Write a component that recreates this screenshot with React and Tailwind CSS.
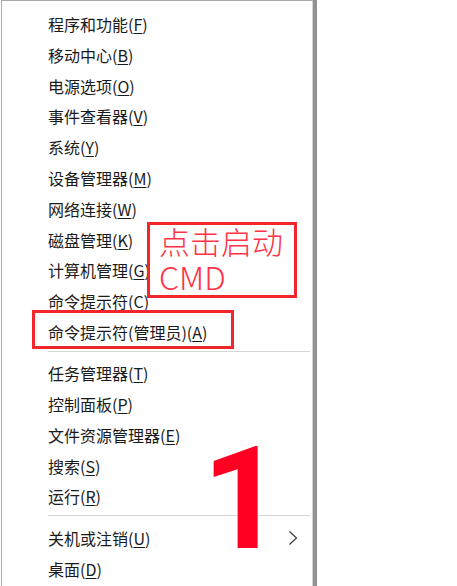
import React from "react";

const groups = [
  [
    ["程序和功能", "F"],
    ["移动中心", "B"],
    ["电源选项", "O"],
    ["事件查看器", "V"],
    ["系统", "Y"],
    ["设备管理器", "M"],
    ["网络连接", "W"],
    ["磁盘管理", "K"],
    ["计算机管理", "G"],
    ["命令提示符", "C"],
    ["命令提示符(管理员)", "A"],
  ],
  [
    ["任务管理器", "T"],
    ["控制面板", "P"],
    ["文件资源管理器", "E"],
    ["搜索", "S"],
    ["运行", "R"],
  ],
  [
    ["关机或注销", "U", true],
    ["桌面", "D"],
  ],
];

const MenuRow = ({ label, hotkey, sub }) => (
  <div className="flex items-center justify-between h-[30.8px] pl-[46px] pr-[14px]">
    <span>
      {label}(<span className="underline underline-offset-2">{hotkey}</span>)
    </span>
    {sub && (
      <svg width="10" height="16" viewBox="0 0 10 16" fill="none">
        <path d="M1.5 1.5 L8.5 8 L1.5 14.5" stroke="#3a3a4a" strokeWidth="1.2" />
      </svg>
    )}
  </div>
);

export default function App() {
  return (
    <div className="relative w-[457px] h-[586px] bg-white overflow-hidden text-[16px] text-[#1a1a1a] font-['Noto_Sans_CJK_SC','Noto_Sans',sans-serif]">
      <div className="flex h-full">
        <div className="w-[317px] h-full border-r-[4px] border-[#929292]">
          <div className="h-full ml-[1px] border-l border-t border-r border-l-[#a8a8a8] border-t-[#a8a8a8] border-r-[#d4d4d4] pt-[7.6px]">
            {groups.map((g, gi) => (
              <div key={gi}>
                {gi > 0 && <div className="h-px bg-[#d6d6d6] ml-[46px] mr-[2px] mt-[3.5px] mb-[6px]" />}
                {g.map(([label, hotkey, sub]) => (
                  <MenuRow key={label} label={label} hotkey={hotkey} sub={sub} />
                ))}
              </div>
            ))}
          </div>
        </div>
      </div>

      {/* annotation boxes */}
      <div className="absolute left-[32px] top-[310px] w-[202px] h-[39px] border-[3px] border-[#f2262c]" />
      <div className="absolute left-[147px] top-[222px] w-[150px] h-[76px] border-[3px] border-[#f2262c] bg-white pl-[9px] text-[#ff3347] font-light">
        <div className="text-[31px] leading-[32px]">点击启动</div>
        <div className="text-[32px] leading-[38px]">CMD</div>
      </div>

      <span className="absolute left-[202px] top-[429px] text-[142px] leading-none font-bold text-[#ff0022] font-['Roboto',sans-serif]">
        1
      </span>
    </div>
  );
}
